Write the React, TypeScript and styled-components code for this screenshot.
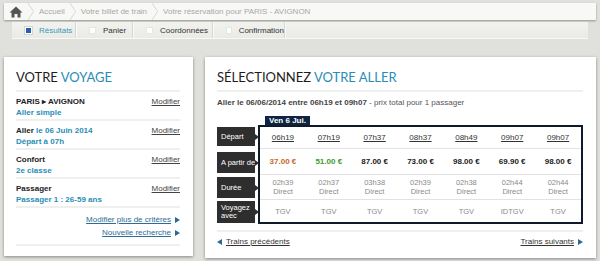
import React from 'react';
import styled, { createGlobalStyle } from 'styled-components';

const GlobalStyle = createGlobalStyle`
  html, body {
    margin: 0;
    padding: 0;
    background: #e0e0dc;
    font-family: "Liberation Sans", Arial, sans-serif;
    color: #222;
  }
  * {
    box-sizing: border-box;
  }
`;

const Page = styled.div`
  width: 600px;
  height: 261px;
  overflow: hidden;
  display: flex;
  flex-direction: column;
`;

const Breadcrumb = styled.nav`
  margin: 3px 4px 0;
  height: 17px;
  background: #f8f8f6;
  box-shadow: 0 1px 2px rgba(0, 0, 0, 0.35);
  display: flex;
  align-items: center;
  padding-left: 5px;
  gap: 4px;
  font-size: 8px;
  color: #a8a8a8;
`;

const Crumb = styled.span`
  white-space: nowrap;
`;

const Steps = styled.div`
  margin: 2px 12px 0;
  height: 17px;
  background: linear-gradient(#f2f2ef, #eaeae6);
  border-bottom: 1px solid #f8f8f6;
  display: flex;
  align-items: stretch;
  font-size: 8px;
`;

const Step = styled.div<{ $active?: boolean; $width: number }>`
  width: ${(p) => p.$width}px;
  display: flex;
  align-items: center;
  gap: 7px;
  padding-left: 13px;
  border-right: 1px solid #d6d6d2;
  box-shadow: 1px 0 0 #fafaf8;
  white-space: nowrap;
  color: ${(p) => (p.$active ? '#3a9bb8' : '#333')};
`;

const StepBox = styled.span<{ $active?: boolean }>`
  width: 7px;
  height: 7px;
  background: ${(p) => (p.$active ? '#2b5da6' : '#fff')};
  border: 1px solid ${(p) => (p.$active ? '#fff' : '#e6e6e2')};
  outline: ${(p) => (p.$active ? '1px solid #d4d4d0' : 'none')};
`;

const Main = styled.div`
  display: flex;
  gap: 12px;
  padding: 18px 4px 0;
  align-items: flex-start;
`;

const Card = styled.section<{ $width: number; $height: number }>`
  width: ${(p) => p.$width}px;
  height: ${(p) => p.$height}px;
  background: #fff;
  box-shadow: 0 1px 3px rgba(0, 0, 0, 0.4);
  padding: 12px 13px 0 12px;
  display: flex;
  flex-direction: column;
`;

const Title = styled.h2`
  margin: 0 0 5px;
  font-family: Lato, "Open Sans", sans-serif;
  font-weight: 400;
  font-size: 13px;
  line-height: 16px;
  color: #1d1d1d;
  white-space: nowrap;
`;

const Accent = styled.span`
  color: #2a8db5;
`;

const Divider = styled.hr<{ $top?: number }>`
  margin: ${(p) => p.$top ?? 0}px 0 0;
  border: none;
  height: 2px;
  background: #efefed;
  flex-shrink: 0;
`;

const InfoRow = styled.div`
  display: flex;
  justify-content: space-between;
  align-items: flex-start;
  padding: 4px 0 1px;
  font-size: 8px;
  line-height: 11px;
  font-weight: bold;
`;

const InfoText = styled.div`
  display: flex;
  flex-direction: column;
`;

const Blue = styled.span`
  color: #2a8db5;
`;

const ModifyLink = styled.a`
  color: #444;
  font-weight: normal;
  text-decoration: underline;
  font-size: 8px;
`;

const LinkList = styled.div`
  display: flex;
  flex-direction: column;
  align-items: flex-end;
  padding: 5px 0 5px;
  font-size: 8px;
  line-height: 13px;
`;

const ArrowLink = styled.a<{ $left?: boolean; $color?: string }>`
  display: flex;
  align-items: center;
  gap: 4px;
  flex-direction: ${(p) => (p.$left ? 'row-reverse' : 'row')};
  color: ${(p) => p.$color ?? '#2c6d96'};
  font-size: 8px;
  span {
    text-decoration: underline;
  }
`;

const Tri = styled.i<{ $left?: boolean }>`
  width: 0;
  height: 0;
  border-top: 3px solid transparent;
  border-bottom: 3px solid transparent;
  ${(p) =>
    p.$left ? 'border-right: 5px solid #2a6a9a;' : 'border-left: 5px solid #2a6a9a;'}
`;

const Summary = styled.p`
  margin: 6px 0 0;
  font-size: 8px;
  line-height: 10px;
  color: #555;
  white-space: nowrap;
  b {
    color: #444;
  }
`;

const TableArea = styled.div`
  margin-top: 8px;
  display: flex;
  align-items: flex-end;
  gap: 4px;
`;

const Labels = styled.div`
  width: 37px;
  display: grid;
  grid-template-rows: 22px 26px 25px 22px;
  padding: 2px 0;
`;

const Label = styled.div<{ $mt: number; $mb: number }>`
  position: relative;
  margin: ${(p) => p.$mt}px 0 ${(p) => p.$mb}px;
  background: #2e2e2e;
  color: #fff;
  font-size: 7.5px;
  line-height: 8px;
  padding: 0 0 0 4px;
  display: flex;
  align-items: center;
  white-space: pre;
  &::after {
    content: '';
    position: absolute;
    right: -4px;
    top: 50%;
    margin-top: -3px;
    border-top: 3px solid transparent;
    border-bottom: 3px solid transparent;
    border-left: 4px solid #2e2e2e;
  }
`;

const TableCol = styled.div`
  display: flex;
  flex-direction: column;
  align-items: flex-start;
`;

const DayTag = styled.div`
  margin-left: 7px;
  height: 9px;
  padding: 0 4px;
  background: #0e2442;
  color: #fff;
  font-size: 8px;
  font-weight: bold;
  line-height: 9px;
`;

const Grid = styled.div`
  width: 325px;
  border: 2px solid #0f1b2b;
  display: grid;
  grid-template-columns: repeat(7, 1fr);
  grid-template-rows: 22px 26px 25px 22px;
`;

const Cell = styled.div<{ $last?: boolean }>`
  display: flex;
  flex-direction: column;
  align-items: center;
  justify-content: center;
  border-bottom: ${(p) => (p.$last ? 'none' : '1px solid #e2e2e2')};
  font-size: 8px;
  line-height: 9px;
`;

const Time = styled.a`
  color: #333;
  text-decoration: underline;
`;

const Price = styled.span<{ $color: string }>`
  color: ${(p) => p.$color};
  font-weight: bold;
`;

const Muted = styled.span`
  color: #8a8a8a;
  font-size: 7.5px;
`;

const Footer = styled.div`
  margin-top: 5px;
  display: flex;
  justify-content: space-between;
  line-height: 10px;
  width: 366px;
`;

const HomeIcon = () => (
  <svg width="14" height="12" viewBox="0 0 14 12">
    <path d="M7 0.5 L13.5 6.5 L11.5 6.5 L11.5 11.5 L8.5 11.5 L8.5 8 L5.5 8 L5.5 11.5 L2.5 11.5 L2.5 6.5 L0.5 6.5 Z" fill="#555" />
  </svg>
);

const Chevron = () => (
  <svg width="8" height="17" viewBox="0 0 8 17">
    <polyline points="1,0 6.5,8.5 1,17" fill="none" stroke="#d8d8d6" strokeWidth="1" />
  </svg>
);

const trains = [
  { time: '06h19', price: '37.00 €', color: '#c8682c', dur: '02h39', type: 'TGV' },
  { time: '07h19', price: '51.00 €', color: '#3c9a30', dur: '02h37', type: 'TGV' },
  { time: '07h37', price: '87.00 €', color: '#222', dur: '03h38', type: 'TGV' },
  { time: '08h37', price: '73.00 €', color: '#222', dur: '02h39', type: 'TGV' },
  { time: '08h49', price: '98.00 €', color: '#222', dur: '02h38', type: 'TGV' },
  { time: '09h07', price: '69.90 €', color: '#222', dur: '02h44', type: 'IDTGV' },
  { time: '09h07', price: '98.00 €', color: '#222', dur: '02h44', type: 'TGV' },
];

const labels = [
  { text: 'Départ', mt: 0, mb: 3 },
  { text: 'A partir de', mt: 3, mb: 2 },
  { text: 'Durée', mt: 2, mb: 2 },
  { text: 'Voyagez\navec', mt: 1, mb: -1 },
];

const steps = [
  { name: 'Résultats', width: 64, active: true },
  { name: 'Panier', width: 57 },
  { name: 'Coordonnées', width: 80 },
  { name: 'Confirmation', width: 72 },
];

const voyage = [
  { top: 'PARIS ▸ AVIGNON', bottom: 'Aller simple' },
  { top: 'Aller', accent: 'le 06 Juin 2014', bottom: 'Départ à 07h' },
  { top: 'Confort', bottom: '2e classe' },
  { top: 'Passager', bottom: 'Passager 1 : 26-59 ans' },
];

export default function App() {
  return (
    <Page>
      <GlobalStyle />
      <Breadcrumb>
        <HomeIcon />
        <Chevron />
        <Crumb>Accueil</Crumb>
        <Chevron />
        <Crumb>Votre billet de train</Crumb>
        <Chevron />
        <Crumb>Votre réservation pour PARIS - AVIGNON</Crumb>
      </Breadcrumb>

      <Steps>
        {steps.map((s) => (
          <Step key={s.name} $active={s.active} $width={s.width}>
            <StepBox $active={s.active} />
            {s.name}
          </Step>
        ))}
      </Steps>

      <Main>
        <Card $width={189} $height={199}>
          <Title>
            VOTRE <Accent>VOYAGE</Accent>
          </Title>
          <Divider />
          {voyage.map((v) => (
            <React.Fragment key={v.top}>
              <InfoRow>
                <InfoText>
                  <span>
                    {v.top}
                    {v.accent && <Blue> {v.accent}</Blue>}
                  </span>
                  <Blue>{v.bottom}</Blue>
                </InfoText>
                <ModifyLink>Modifier</ModifyLink>
              </InfoRow>
              <Divider />
            </React.Fragment>
          ))}
          <LinkList>
            <ArrowLink>
              <span>Modifier plus de critères</span>
              <Tri />
            </ArrowLink>
            <ArrowLink>
              <span>Nouvelle recherche</span>
              <Tri />
            </ArrowLink>
          </LinkList>
          <Divider />
        </Card>

        <Card $width={391} $height={201}>
          <Title>
            SÉLECTIONNEZ <Accent>VOTRE ALLER</Accent>
          </Title>
          <Divider />
          <Summary>
            <b>Aller le 06/06/2014 entre 06h19 et 09h07</b> - prix total pour 1 passager
          </Summary>
          <TableArea>
            <Labels>
              {labels.map((l) => (
                <Label key={l.text} $mt={l.mt} $mb={l.mb}>
                  {l.text}
                </Label>
              ))}
            </Labels>
            <TableCol>
              <DayTag>Ven 6 Jui.</DayTag>
              <Grid>
                {trains.map((t, i) => (
                  <Cell key={'t' + i}>
                    <Time>{t.time}</Time>
                  </Cell>
                ))}
                {trains.map((t, i) => (
                  <Cell key={'p' + i}>
                    <Price $color={t.color}>{t.price}</Price>
                  </Cell>
                ))}
                {trains.map((t, i) => (
                  <Cell key={'d' + i}>
                    <Muted>{t.dur}</Muted>
                    <Muted>Direct</Muted>
                  </Cell>
                ))}
                {trains.map((t, i) => (
                  <Cell key={'y' + i} $last>
                    <Muted>{t.type}</Muted>
                  </Cell>
                ))}
              </Grid>
            </TableCol>
          </TableArea>
          <Divider $top={6} />
          <Footer>
            <ArrowLink $left $color="#333">
              <span>Trains précédents</span>
              <Tri $left />
            </ArrowLink>
            <ArrowLink $color="#333">
              <span>Trains suivants</span>
              <Tri />
            </ArrowLink>
          </Footer>
        </Card>
      </Main>
    </Page>
  );
}
